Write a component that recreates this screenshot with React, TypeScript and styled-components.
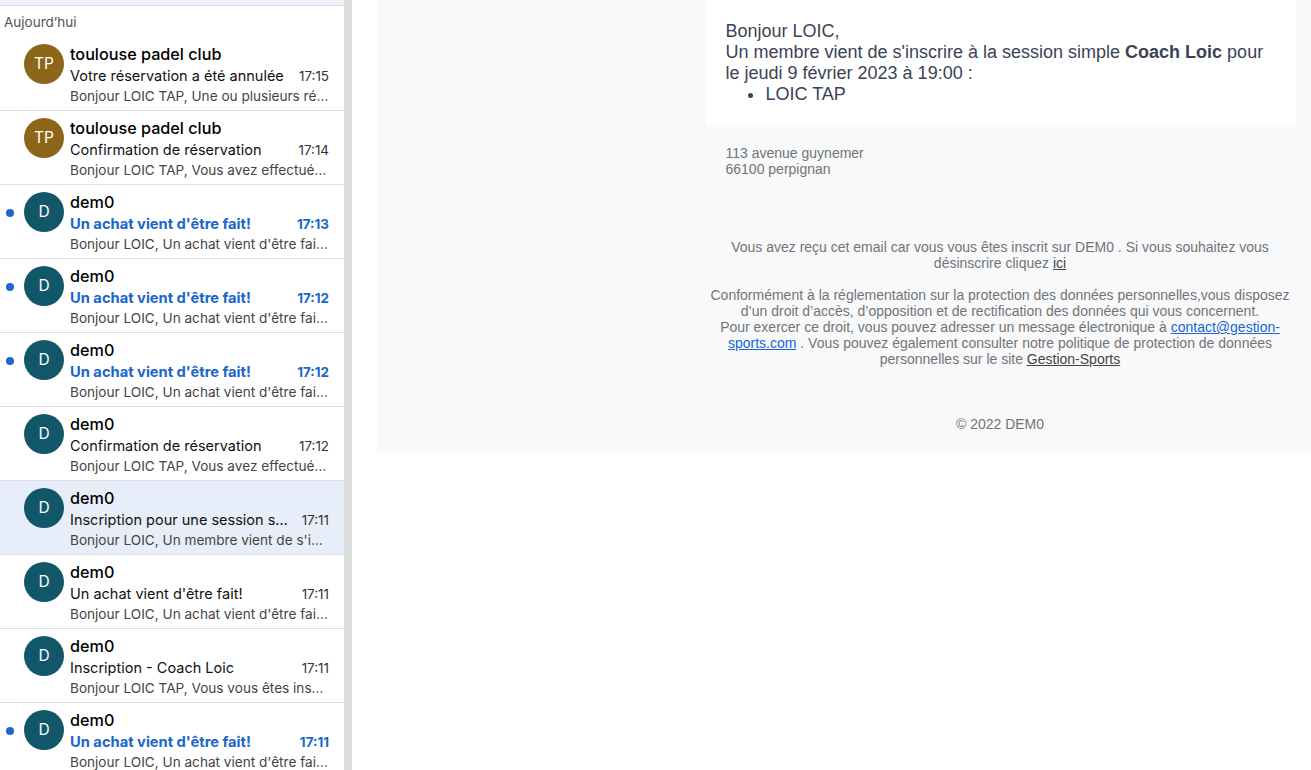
import styled, { createGlobalStyle } from "styled-components";

const GlobalStyle = createGlobalStyle`
  html, body {
    margin: 0;
    height: 100%;
    overflow: hidden;
    background: #ffffff;
  }
`;

const Page = styled.div`
  display: flex;
  height: 770px;
  width: 1311px;
  overflow: hidden;
`;

const Sidebar = styled.div`
  width: 344px;
  flex: none;
  height: 770px;
  overflow: hidden;
  background: #ffffff;
  font-family: "Inter", "Liberation Sans", sans-serif;
`;

const Divider = styled.div`
  width: 8px;
  flex: none;
  background: #dddddd;
`;

const TopStrip = styled.div`
  height: 5px;
  background: #eef3fb;
  border-bottom: 1px solid #dcdfe3;
`;

const GroupTitle = styled.div`
  height: 31px;
  padding: 8px 0 0 4px;
  box-sizing: border-box;
  font-size: 13.5px;
  line-height: 16px;
  color: #555555;
`;

const Row = styled.div<{ $selected?: boolean }>`
  position: relative;
  display: flex;
  height: 74px;
  box-sizing: border-box;
  padding: 7px 15px 0 24px;
  gap: 6px;
  background: ${(p) => (p.$selected ? "#e7eef9" : "#ffffff")};
  border-bottom: 1px solid #dcdfe3;
`;

const UnreadDot = styled.span`
  position: absolute;
  left: 6px;
  top: 24px;
  width: 8px;
  height: 8px;
  border-radius: 50%;
  background: #1e66d0;
`;

const Avatar = styled.div<{ $color: string }>`
  width: 40px;
  height: 40px;
  flex: none;
  border-radius: 50%;
  background: ${(p) => p.$color};
  color: #ffffff;
  font-size: 15.5px;
  padding-bottom: 2px;
  box-sizing: border-box;
  display: flex;
  align-items: center;
  justify-content: center;
`;

const RowBody = styled.div`
  flex: 1;
  min-width: 0;
`;

const Sender = styled.div`
  font-size: 16.2px;
  line-height: 20px;
  font-weight: 500;
  color: #000000;
`;

const SubjectLine = styled.div<{ $unread?: boolean }>`
  display: flex;
  justify-content: space-between;
  align-items: center;
  gap: 12px;
  height: 22px;
  font-size: ${(p) => (p.$unread ? "14.7px" : "14.5px")};
  color: ${(p) => (p.$unread ? "#1a66c9" : "#111111")};
  font-weight: ${(p) => (p.$unread ? 700 : 400)};
`;

const Subject = styled.span<{ $unread?: boolean }>`
  padding-top: ${(p) => (p.$unread ? "2px" : "0")};
  white-space: nowrap;
  overflow: hidden;
  text-overflow: ellipsis;
`;

const Time = styled.span<{ $unread?: boolean }>`
  flex: none;
  padding-top: 2px;
  font-size: 13.4px;
  color: ${(p) => (p.$unread ? "#1a66c9" : "#333333")};
`;

const Preview = styled.div`
  font-size: 13.6px;
  line-height: 20px;
  color: #444444;
  white-space: nowrap;
  overflow: hidden;
  text-overflow: ellipsis;
`;

const Reader = styled.div`
  flex: 1;
  min-width: 0;
  padding-left: 25px;
  font-family: "Liberation Sans", Arial, sans-serif;
`;

const MailCanvas = styled.div`
  height: 452px;
  background: #f8f9fb;
  padding-left: 329px;
  box-sizing: border-box;
`;

const MailColumn = styled.div`
  width: 590px;
`;

const MailCard = styled.div`
  height: 125px;
  box-sizing: border-box;
  background: #ffffff;
  padding: 21px 20px 0 19.5px;
  font-size: 18px;
  line-height: 21px;
  color: #3a4354;
  b {
    font-weight: 700;
  }
  ul {
    margin: 0;
    padding-left: 40px;
    list-style: none;
  }
  li {
    position: relative;
  }
  li::before {
    content: "";
    position: absolute;
    left: -17.5px;
    top: 9px;
    width: 5px;
    height: 5px;
    border-radius: 50%;
    background: #3a4354;
  }
`;

const Address = styled.div`
  padding: 20px 20px 0 19.5px;
  font-size: 14px;
  line-height: 16px;
  color: #747474;
`;

const Legal = styled.div`
  margin-top: 62px;
  text-align: center;
  font-size: 14px;
  line-height: 16px;
  color: #747474;
  padding: 0 3px 0 1px;
  p {
    margin: 0 0 16px;
  }
`;

const Copyright = styled.div`
  margin-top: 49px;
  padding-right: 2px;
  text-align: center;
  font-size: 14px;
  line-height: 16px;
  color: #747474;
`;

const PlainLink = styled.a`
  color: #444444;
  text-decoration: underline;
`;

const MailLink = styled.a`
  color: #1a66d6;
  text-decoration: underline;
`;

const TP = "#8c6518";
const DEM = "#12566a";

const mails = [
  { initials: "TP", color: TP, sender: "toulouse padel club", subject: "Votre réservation a été annulée", time: "17:15", preview: "Bonjour LOIC TAP, Une ou plusieurs réservations" },
  { initials: "TP", color: TP, sender: "toulouse padel club", subject: "Confirmation de réservation", time: "17:14", preview: "Bonjour LOIC TAP, Vous avez effectué une réservation" },
  { initials: "D", color: DEM, sender: "dem0", subject: "Un achat vient d'être fait!", time: "17:13", preview: "Bonjour LOIC, Un achat vient d'être fait sur votre club", unread: true },
  { initials: "D", color: DEM, sender: "dem0", subject: "Un achat vient d'être fait!", time: "17:12", preview: "Bonjour LOIC, Un achat vient d'être fait sur votre club", unread: true },
  { initials: "D", color: DEM, sender: "dem0", subject: "Un achat vient d'être fait!", time: "17:12", preview: "Bonjour LOIC, Un achat vient d'être fait sur votre club", unread: true },
  { initials: "D", color: DEM, sender: "dem0", subject: "Confirmation de réservation", time: "17:12", preview: "Bonjour LOIC TAP, Vous avez effectué une réservation" },
  { initials: "D", color: DEM, sender: "dem0", subject: "Inscription pour une session simple", time: "17:11", preview: "Bonjour LOIC, Un membre vient de s'inscrire à la session", selected: true },
  { initials: "D", color: DEM, sender: "dem0", subject: "Un achat vient d'être fait!", time: "17:11", preview: "Bonjour LOIC, Un achat vient d'être fait sur votre club" },
  { initials: "D", color: DEM, sender: "dem0", subject: "Inscription - Coach Loic", time: "17:11", preview: "Bonjour LOIC TAP, Vous vous êtes inscrit à la session" },
  { initials: "D", color: DEM, sender: "dem0", subject: "Un achat vient d'être fait!", time: "17:11", preview: "Bonjour LOIC, Un achat vient d'être fait sur votre club", unread: true },
];

export default function App() {
  return (
    <Page>
      <GlobalStyle />
      <Sidebar>
        <TopStrip />
        <GroupTitle>Aujourd’hui</GroupTitle>
        {mails.map((m, i) => (
          <Row key={i} $selected={m.selected}>
            {m.unread && <UnreadDot />}
            <Avatar $color={m.color}>{m.initials}</Avatar>
            <RowBody>
              <Sender>{m.sender}</Sender>
              <SubjectLine $unread={m.unread}>
                <Subject $unread={m.unread}>{m.subject}</Subject>
                <Time $unread={m.unread}>{m.time}</Time>
              </SubjectLine>
              <Preview>{m.preview}</Preview>
            </RowBody>
          </Row>
        ))}
      </Sidebar>
      <Divider />
      <Reader>
        <MailCanvas>
          <MailColumn>
            <MailCard>
              Bonjour LOIC,
              <br />
              Un membre vient de s'inscrire à la session simple <b>Coach Loic</b> pour le jeudi 9 février 2023 à 19:00 :
              <ul>
                <li>LOIC TAP</li>
              </ul>
            </MailCard>
            <Address>
              113 avenue guynemer
              <br />
              66100 perpignan
            </Address>
            <Legal>
              <p>
                Vous avez reçu cet email car vous vous êtes inscrit sur DEM0 . Si vous souhaitez vous désinscrire cliquez <PlainLink href="#">ici</PlainLink>
              </p>
              <p>
                Conformément à la réglementation sur la protection des données personnelles,vous disposez d’un droit d’accès, d’opposition et de rectification des données qui vous concernent.
                <br />
                Pour exercer ce droit, vous pouvez adresser un message électronique à <MailLink href="#">contact@gestion-sports.com</MailLink> . Vous pouvez également consulter notre politique de protection de données personnelles sur le site <PlainLink href="#">Gestion-Sports</PlainLink>
              </p>
            </Legal>
            <Copyright>© 2022 DEM0</Copyright>
          </MailColumn>
        </MailCanvas>
      </Reader>
    </Page>
  );
}
